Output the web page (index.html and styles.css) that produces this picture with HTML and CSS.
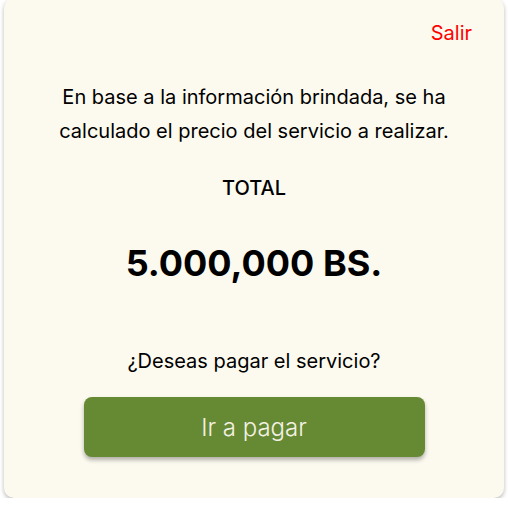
FILE: index.html
```html
<!DOCTYPE html>
<html lang="es">
<head>
<meta charset="utf-8">
<link rel="stylesheet" href="styles.css">
</head>
<body>
<div class="card">
  <div class="top"><a class="salir">Salir</a></div>
  <p class="info">En base a la información brindada, se ha<br>calculado el precio del servicio a realizar.</p>
  <div class="total-label">TOTAL</div>
  <div class="amount">5.000,000 BS.</div>
  <div class="question">¿Deseas pagar el servicio?</div>
  <button class="pay">Ir a pagar</button>
</div>
</body>
</html>
```
FILE: styles.css
```css
html, body { margin: 0; padding: 0; background: #fff; }
body { font-family: Inter, "Noto Sans", sans-serif; color: #000; }
.card {
  box-sizing: border-box;
  margin: -2px 0 0 4px;
  width: 500px;
  height: 500px;
  background: #fcfaef;
  border-radius: 10px;
  box-shadow: 0 2px 4px rgba(0,0,0,0.28);
  display: flex;
  flex-direction: column;
  align-items: center;
  padding: 0 32px;
}
.top { align-self: stretch; display: flex; justify-content: flex-end; padding-top: 23px; }
.salir { color: #ff0000; font-size: 20px; line-height: 24px; }
.info { margin: 35px 0 0; text-align: center; font-size: 20px; line-height: 34px; }
.total-label { margin-top: 28px; font-size: 20px; font-weight: 500; line-height: 24px; }
.amount { margin-top: 41px; font-size: 36px; font-weight: 700; line-height: 44px; }
.question { margin-top: 64px; font-size: 20px; line-height: 24px; }
.pay {
  margin-top: 24px;
  width: 341px;
  height: 60px;
  border: none;
  border-radius: 8px;
  background: #668a33;
  color: #f4f1e4;
  font-family: Inter, "Noto Sans", sans-serif;
  font-size: 24px;
  font-weight: 300;
  box-shadow: 0 3px 4px rgba(0,0,0,0.3);
}
```
